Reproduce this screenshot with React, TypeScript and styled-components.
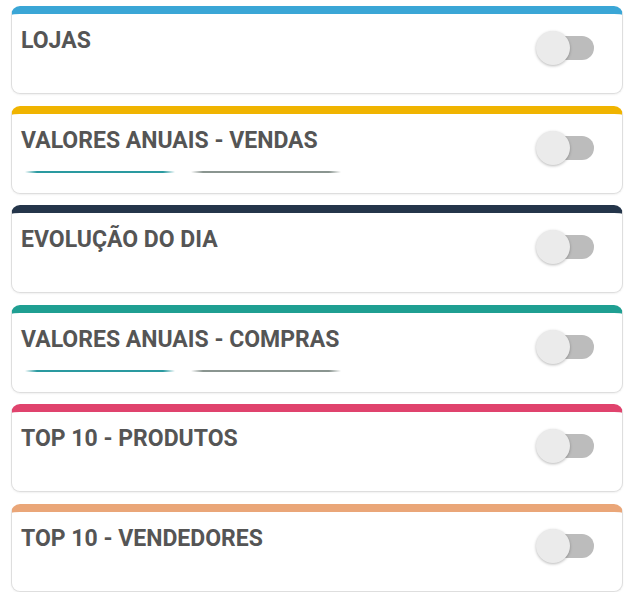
import React from "react";
import styled, { createGlobalStyle } from "styled-components";

const Global = createGlobalStyle`
  html, body { margin: 0; padding: 0; background: #ffffff; }
  body { font-family: Roboto, "Liberation Sans", Arial, sans-serif; }
`;

const List = styled.div`
  display: flex;
  flex-direction: column;
  gap: 11.5px;
  padding: 6px 6px 0 11px;
  width: 612px;
`;

const Card = styled.div<{ $color: string }>`
  box-sizing: border-box;
  height: 88px;
  background: #fff;
  border: 1px solid #dedede;
  border-top: 8px solid ${(p) => p.$color};
  border-radius: 9px;
  box-shadow: 0 1px 2px rgba(0, 0, 0, 0.06);
  display: flex;
  justify-content: space-between;
  align-items: flex-start;
  padding: 13px 28px 0 9px;
`;

const Body = styled.div`
  display: flex;
  flex-direction: column;
`;

const Title = styled.div`
  font-family: Roboto, "Liberation Sans", Arial, sans-serif;
  font-weight: 700;
  font-size: 23px;
  line-height: 28px;
  color: #555555;
`;

const Switch = styled.div`
  position: relative;
  width: 58px;
  height: 36px;
  margin-top: 3px;
  display: flex;
  align-items: center;
`;

const Track = styled.div`
  margin-left: 5px;
  width: 53px;
  height: 24px;
  border-radius: 12px;
  background: #bcbcbc;
`;

const Knob = styled.div`
  position: absolute;
  left: 0;
  top: 1px;
  width: 34px;
  height: 34px;
  border-radius: 50%;
  background: #ebebeb;
  box-shadow: 0 1px 3px rgba(0, 0, 0, 0.28);
`;

const Lines = styled.div`
  display: flex;
  gap: 16px;
  margin-top: 16px;
  padding-left: 4px;
`;

const Line = styled.div<{ $color: string }>`
  width: 150px;
  height: 2px;
  background: linear-gradient(
    to right,
    rgba(255, 255, 255, 0),
    ${(p) => p.$color} 8%,
    ${(p) => p.$color} 92%,
    rgba(255, 255, 255, 0)
  );
`;

type Item = { title: string; color: string; lines?: boolean };

const items: Item[] = [
  { title: "LOJAS", color: "#3aa6d6" },
  { title: "VALORES ANUAIS - VENDAS", color: "#f0b400", lines: true },
  { title: "EVOLUÇÃO DO DIA", color: "#24354a" },
  { title: "VALORES ANUAIS - COMPRAS", color: "#1f9f92", lines: true },
  { title: "TOP 10 - PRODUTOS", color: "#e0436d" },
  { title: "TOP 10 - VENDEDORES", color: "#eaa678" },
];

export default function App() {
  return (
    <>
      <Global />
      <List>
        {items.map((it) => (
          <Card key={it.title} $color={it.color}>
            <Body>
              <Title>{it.title}</Title>
              {it.lines && (
                <Lines>
                  <Line $color="#2a9aa0" />
                  <Line $color="#8a9590" />
                </Lines>
              )}
            </Body>
            <Switch>
              <Track />
              <Knob />
            </Switch>
          </Card>
        ))}
      </List>
    </>
  );
}
